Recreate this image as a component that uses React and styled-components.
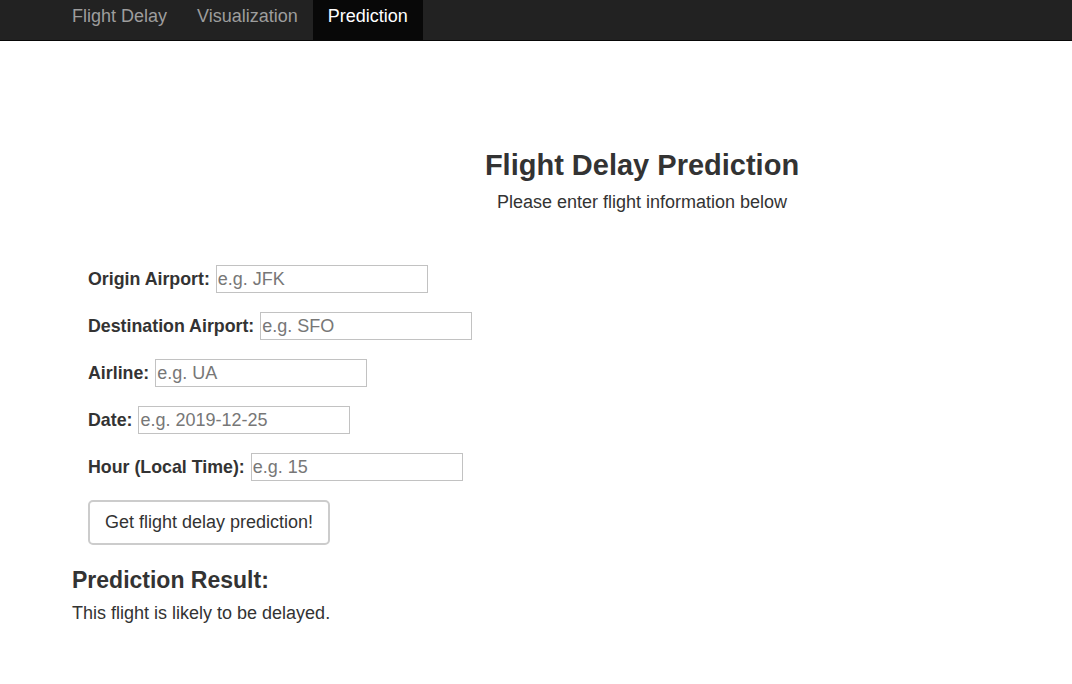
import React from "react";
import styled, { createGlobalStyle } from "styled-components";

const GlobalStyle = createGlobalStyle`
  body {
    margin: 0;
    background: #fff;
    color: #333;
    font-family: "Liberation Sans", Arial, sans-serif;
    font-size: 18px;
  }
  * { box-sizing: border-box; }
`;

const Navbar = styled.nav`
  display: flex;
  height: 41px;
  padding-left: 57px;
  background: #222;
  border-bottom: 1px solid #080808;
`;

const NavLink = styled.a`
  display: block;
  height: 40px;
  padding: 0 15px 0 15px;
  line-height: 32px;
  font-size: 18px;
  text-decoration: none;
  color: ${(p) => (p.active ? "#fff" : "#9d9d9d")};
  background: ${(p) => (p.active ? "#080808" : "transparent")};
`;

const Main = styled.main`
  padding: 0 0 40px 72px;
`;

const Header = styled.header`
  margin-top: 108px;
  padding-left: 140px;
  text-align: center;
`;

const Title = styled.h3`
  margin: 0;
  font-size: 29px;
  line-height: 32px;
  font-weight: 700;
`;

const Subtitle = styled.p`
  margin: 9px 0 0;
  line-height: 24px;
`;

const Form = styled.form`
  display: flex;
  flex-direction: column;
  align-items: flex-start;
  gap: 19px;
  margin-top: 51px;
  padding-left: 16px;
`;

const Row = styled.div`
  display: flex;
  align-items: center;
  gap: 6px;
  height: 28px;
`;

const Label = styled.label`
  font-weight: 700;
  font-size: 17.8px;
`;

const Input = styled.input`
  width: 212px;
  height: 28px;
  padding: 0 1px;
  border: 1px solid #c2c2c2;
  border-radius: 0;
  font-family: inherit;
  font-size: 18px;
  color: #333;
  &::placeholder { color: #777; }
`;

const Button = styled.button`
  height: 45px;
  padding: 0 15px;
  border: 2px solid #ccc;
  border-radius: 5px;
  background: #fff;
  color: #333;
  font-family: inherit;
  font-size: 18px;
`;

const ResultTitle = styled.h4`
  margin: 22px 0 0;
  font-size: 23px;
  line-height: 26px;
  font-weight: 700;
`;

const ResultText = styled.p`
  margin: 8px 0 0;
  line-height: 24px;
`;

const fields = [
  { label: "Origin Airport:", placeholder: "e.g. JFK" },
  { label: "Destination Airport:", placeholder: "e.g. SFO" },
  { label: "Airline:", placeholder: "e.g. UA" },
  { label: "Date:", placeholder: "e.g. 2019-12-25" },
  { label: "Hour (Local Time):", placeholder: "e.g. 15" },
];

const App = () => {
  return (
    <>
      <GlobalStyle />
      <Navbar>
        <NavLink href="#">Flight Delay</NavLink>
        <NavLink href="#">Visualization</NavLink>
        <NavLink href="#" active>
          Prediction
        </NavLink>
      </Navbar>
      <Main>
        <Header>
          <Title>Flight Delay Prediction</Title>
          <Subtitle>Please enter flight information below</Subtitle>
        </Header>
        <Form onSubmit={(e) => e.preventDefault()}>
          {fields.map((f) => (
            <Row key={f.label}>
              <Label>{f.label}</Label>
              <Input placeholder={f.placeholder} />
            </Row>
          ))}
          <Button type="submit">Get flight delay prediction!</Button>
        </Form>
        <ResultTitle>Prediction Result:</ResultTitle>
        <ResultText>This flight is likely to be delayed.</ResultText>
      </Main>
    </>
  );
};

export default App;
